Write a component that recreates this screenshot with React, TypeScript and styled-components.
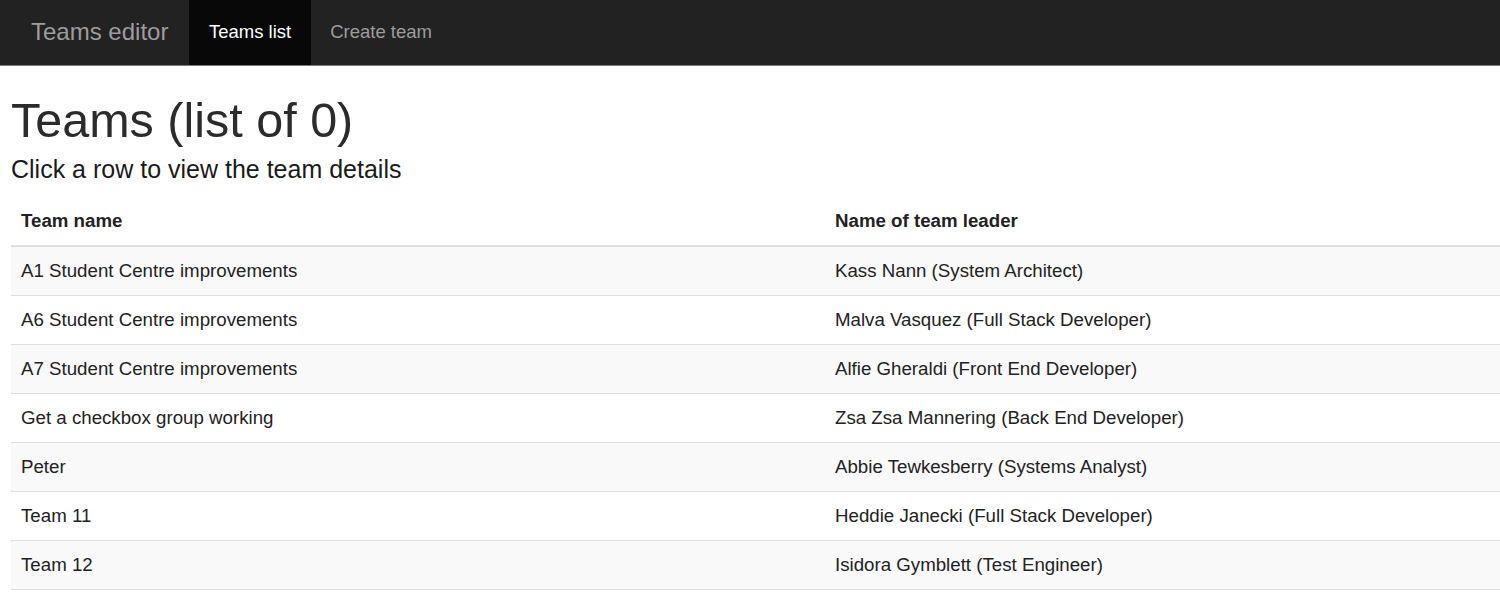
import React from "react";
import styled, { createGlobalStyle } from "styled-components";

const GlobalStyle = createGlobalStyle`
  body {
    margin: 0;
    background: #fff;
    font-family: "Liberation Sans", Arial, sans-serif;
    color: #333;
  }
`;

type Team = { name: string; leader: string };

const teams: Team[] = [
  { name: "A1 Student Centre improvements", leader: "Kass Nann (System Architect)" },
  { name: "A6 Student Centre improvements", leader: "Malva Vasquez (Full Stack Developer)" },
  { name: "A7 Student Centre improvements", leader: "Alfie Gheraldi (Front End Developer)" },
  { name: "Get a checkbox group working", leader: "Zsa Zsa Mannering (Back End Developer)" },
  { name: "Peter", leader: "Abbie Tewkesberry (Systems Analyst)" },
  { name: "Team 11", leader: "Heddie Janecki (Full Stack Developer)" },
  { name: "Team 12", leader: "Isidora Gymblett (Test Engineer)" },
];

export default function App() {
  return (
    <>
      <GlobalStyle />
      <Navbar>
        <Brand>Teams editor</Brand>
        <NavLink active>Teams list</NavLink>
        <NavLink>Create team</NavLink>
      </Navbar>
      <Main>
        <Title>Teams (list of 0)</Title>
        <Subtitle>Click a row to view the team details</Subtitle>
        <Table>
          <HeadRow>
            <HeadCell>Team name</HeadCell>
            <HeadCell>Name of team leader</HeadCell>
          </HeadRow>
          {teams.map((t, i) => (
            <Row key={t.name} striped={i % 2 === 0}>
              <Cell>{t.name}</Cell>
              <Cell>{t.leader}</Cell>
            </Row>
          ))}
        </Table>
      </Main>
    </>
  );
}

const Navbar = styled.nav`
  display: flex;
  align-items: stretch;
  height: 65px;
  background: #222;
  border-bottom: 1px solid #7a7a7a;
  padding-left: 31px;
`;

const Brand = styled.a`
  display: flex;
  align-items: center;
  font-size: 24px;
  color: #9d9d9d;
  margin-right: 21px;
  padding-bottom: 1px;
`;

const NavLink = styled.a<{ active?: boolean }>`
  display: flex;
  align-items: center;
  padding: 0 19.5px 1px;
  font-size: 18.5px;
  color: ${(p) => (p.active ? "#fff" : "#9d9d9d")};
  background: ${(p) => (p.active ? "#080808" : "transparent")};
`;

const Main = styled.main`
  padding-left: 11px;
`;

const Title = styled.h1`
  margin: 28px 0 0;
  font-size: 48.5px;
  line-height: 52px;
  font-weight: 400;
  color: #2b2b2b;
`;

const Subtitle = styled.h4`
  margin: 10px 0 0;
  font-size: 25px;
  line-height: 27px;
  font-weight: 400;
  color: #1a1a1a;
`;

const Table = styled.div`
  margin-top: 14px;
  font-size: 18.7px;
  line-height: 26px;
`;

const HeadRow = styled.div`
  display: grid;
  grid-template-columns: 814px 1fr;
  border-bottom: 2px solid #ddd;
`;

const HeadCell = styled.div`
  padding: 11px 10px 10.5px;
  font-weight: 700;
  color: #222;
`;

const Row = styled.div<{ striped?: boolean }>`
  display: grid;
  grid-template-columns: 814px 1fr;
  background: ${(p) => (p.striped ? "#f9f9f9" : "#fff")};
  border-bottom: 1px solid #ddd;
`;

const Cell = styled.div`
  padding: 11.2px 10px 10.9px;
  color: #222;
`;
